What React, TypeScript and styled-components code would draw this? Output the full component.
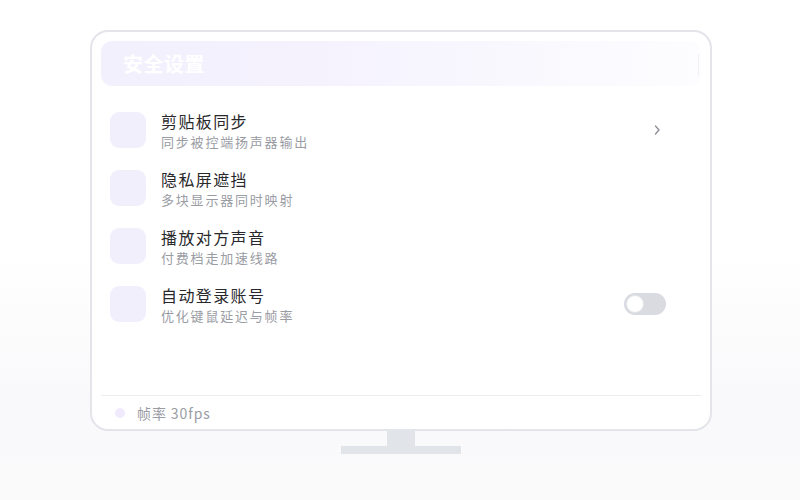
import styled, { createGlobalStyle } from "styled-components";

const GlobalStyle = createGlobalStyle`
  html, body {
    margin: 0;
    padding: 0;
  }
  body {
    width: 800px;
    height: 500px;
    overflow: hidden;
    background: linear-gradient(to bottom, #ffffff 0%, #ffffff 50%, #f9f9fb 80%, #fafafb 100%);
    font-family: "Noto Sans CJK SC", "Noto Sans", sans-serif;
  }
`;

type Item = {
  title: string;
  desc: string;
  trailing?: "chevron" | "toggle";
};

const items: Item[] = [
  { title: "剪贴板同步", desc: "同步被控端扬声器输出", trailing: "chevron" },
  { title: "隐私屏遮挡", desc: "多块显示器同时映射" },
  { title: "播放对方声音", desc: "付费档走加速线路" },
  { title: "自动登录账号", desc: "优化键鼠延迟与帧率", trailing: "toggle" },
];

const App = () => {
  return (
    <Page>
      <GlobalStyle />
      <Monitor>
        <Header>
          <h1>安全设置</h1>
          <span className="edge" />
        </Header>
        <List>
          {items.map((item) => (
            <Row key={item.title}>
              <IconBox />
              <Texts>
                <div className="title">{item.title}</div>
                <div className="desc">{item.desc}</div>
              </Texts>
              <Trailing>
                {item.trailing === "chevron" && (
                  <svg width="8" height="12" viewBox="0 0 8 12">
                    <path
                      d="M2.5 2 L6 6 L2.5 10"
                      fill="none"
                      stroke="#8b8e97"
                      strokeWidth="1.3"
                      strokeLinecap="round"
                      strokeLinejoin="round"
                    />
                  </svg>
                )}
                {item.trailing === "toggle" && <Toggle $on={false} />}
              </Trailing>
            </Row>
          ))}
        </List>
        <Footer>
          <span className="dot" />
          <span>帧率 30fps</span>
        </Footer>
      </Monitor>
      <Neck />
      <Base />
    </Page>
  );
};

export default App;

const Page = styled.div`
  display: flex;
  flex-direction: column;
  align-items: center;
  padding-top: 30px;
  padding-left: 2px;
`;

const Monitor = styled.div`
  box-sizing: border-box;
  width: 622px;
  height: 401px;
  border: 2px solid #e3e5ea;
  border-radius: 18px;
  background: #ffffff;
  padding: 9px 9px 0;
  display: flex;
  flex-direction: column;
`;

const Header = styled.div`
  position: relative;
  height: 45px;
  border-radius: 11px;
  background: linear-gradient(to right, #f3f0fe 0%, #f5f2fe 35%, #f9f8fe 70%, #fdfdff 100%);
  display: flex;
  align-items: center;
  padding-left: 22px;
  h1 {
    margin: 0;
    font-size: 20px;
    font-weight: 700;
    color: #ffffff;
    letter-spacing: 0.5px;
  }
  .edge {
    position: absolute;
    right: 2px;
    top: 13px;
    width: 1px;
    height: 22px;
    background: #eef0f4;
  }
`;

const List = styled.div`
  flex: 1;
  display: flex;
  flex-direction: column;
  padding-top: 15px;
`;

const Row = styled.div`
  display: flex;
  align-items: center;
  height: 58px;
  padding: 0 35px 0 9px;
  gap: 15px;
`;

const IconBox = styled.div`
  width: 36px;
  height: 36px;
  border-radius: 9px;
  background: #f2effd;
  flex-shrink: 0;
`;

const Texts = styled.div`
  flex: 1;
  display: flex;
  flex-direction: column;
  gap: 1px;
  .title {
    font-size: 16px;
    line-height: 22px;
    color: #29292c;
    letter-spacing: 1.4px;
  }
  .desc {
    font-size: 13px;
    line-height: 18px;
    color: #9a9ca4;
    letter-spacing: 1.8px;
  }
`;

const Trailing = styled.div`
  width: 42px;
  display: flex;
  justify-content: flex-end;
  align-items: center;
  svg {
    margin-right: 5px;
  }
`;

const Toggle = styled.div<{ $on: boolean }>`
  position: relative;
  width: 42px;
  height: 22px;
  border-radius: 11px;
  background: ${(p) => (p.$on ? "#8b7cf6" : "#d9dbe1")};
  &::after {
    content: "";
    box-sizing: border-box;
    position: absolute;
    top: 2px;
    left: ${(p) => (p.$on ? "22px" : "2px")};
    width: 18px;
    height: 18px;
    border-radius: 50%;
    background: #ffffff;
    border: 1px solid #e4e6ea;
  }
`;

const Footer = styled.div`
  height: 33px;
  border-top: 1px solid #eceef2;
  display: flex;
  align-items: center;
  gap: 12px;
  padding-left: 14px;
  font-size: 14px;
  color: #9a9ca4;
  letter-spacing: 0.9px;
  .dot {
    width: 10px;
    height: 10px;
    border-radius: 50%;
    background: #efebfd;
  }
`;

const Neck = styled.div`
  width: 28px;
  height: 15px;
  background: #e1e4e8;
`;

const Base = styled.div`
  width: 120px;
  height: 8px;
  background: #e1e4e8;
`;
